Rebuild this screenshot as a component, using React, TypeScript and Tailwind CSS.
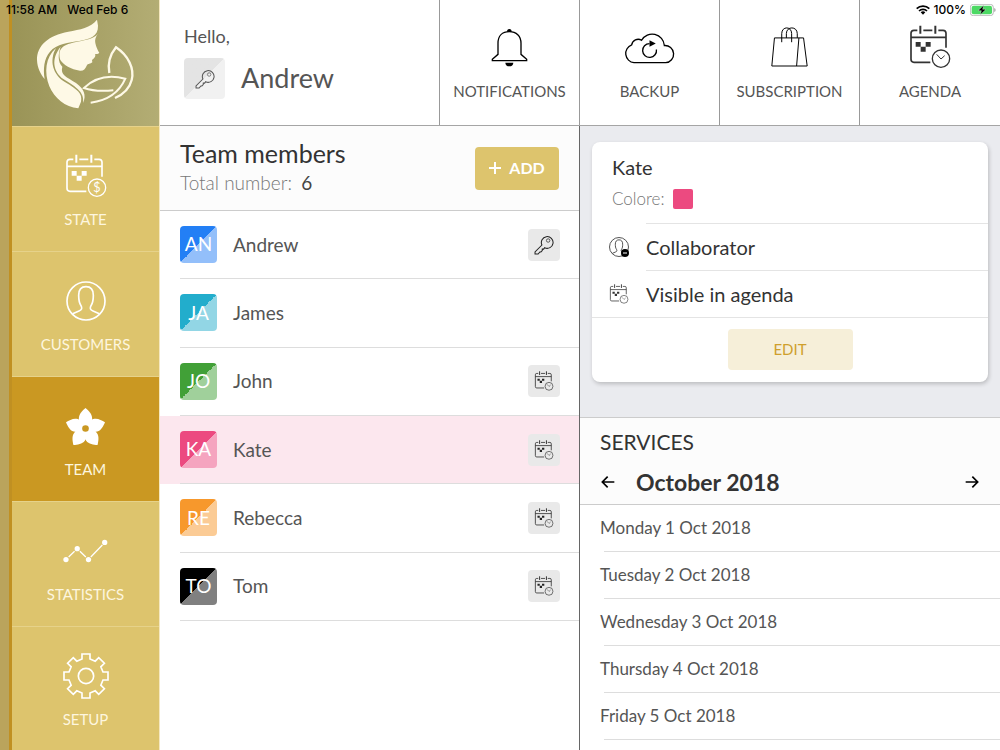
import React, { useState } from "react";
import clsx from "clsx";

type IconProps = { className?: string };

const members = [
  { name: "Andrew", code: "AN", dark: "#237ff5", light: "#93bffa", badge: "key" },
  { name: "James", code: "JA", dark: "#22adcc", light: "#92d6e5", badge: "" },
  { name: "John", code: "JO", dark: "#41a037", light: "#a0d09b", badge: "agenda" },
  { name: "Kate", code: "KA", dark: "#ec4a80", light: "#f5a4bf", badge: "agenda" },
  { name: "Rebecca", code: "RE", dark: "#f7982c", light: "#fbcb95", badge: "agenda" },
  { name: "Tom", code: "TO", dark: "#000000", light: "#808080", badge: "agenda" },
];

const days = [
  "Monday 1 Oct 2018",
  "Tuesday 2 Oct 2018",
  "Wednesday 3 Oct 2018",
  "Thursday 4 Oct 2018",
  "Friday 5 Oct 2018",
];

const CalendarBase = () => (
  <>
    <path
      d="M111 68V25a9 9 0 0 0-9-9H88M70 16H43M25 16H15a9 9 0 0 0-9 9v78a9 9 0 0 0 9 9h49M6 37h105"
      fill="none"
      stroke="currentColor"
      strokeWidth="5"
    />
    <path d="M34 2v24M79 2v24" stroke="currentColor" strokeWidth="6" />
    <path d="M20 51h15v14h15V51h15v14H50v15H35V65H20z" fill="currentColor" />
  </>
);

const AgendaIcon = ({ className }: IconProps) => (
  <svg viewBox="0 0 126 132" className={className} aria-hidden="true">
    <CalendarBase />
    <g fill="none" stroke="currentColor" strokeWidth="4">
      <circle cx="96" cy="101" r="26" />
      <path d="M83 88l13 14 11-10" strokeWidth="3" />
    </g>
  </svg>
);

const StateIcon = ({ className }: IconProps) => (
  <svg viewBox="0 0 126 132" className={className} aria-hidden="true">
    <CalendarBase />
    <circle cx="96" cy="101" r="26" fill="none" stroke="currentColor" strokeWidth="4" />
    <text x="96" y="114" textAnchor="middle" fontSize="38" fill="currentColor">
      $
    </text>
  </svg>
);

const PersonIcon = ({ className, minus }: IconProps & { minus?: boolean }) => (
  <svg viewBox="0 0 120 120" className={className} aria-hidden="true">
    <g fill="none" stroke="currentColor" strokeWidth="5">
      <circle cx="60" cy="60" r="57" />
      <path d="M20 98l19-8c9-3 10-9 6-16-6-8-7-18-7-31 0-17 8-26 22-26s22 9 22 26c0 13-1 23-7 31-4 7-3 13 6 16l19 8" />
    </g>
    {minus && (
      <>
        <circle cx="96" cy="96" r="24" fill="#000" />
        <path d="M84 96h24" stroke="#fff" strokeWidth="6" />
      </>
    )}
  </svg>
);

const FlowerIcon = ({ className }: IconProps) => (
  <svg viewBox="-62 -68 124 124" className={className} aria-hidden="true">
    {[0, 72, 144, 216, 288].map((angle) => (
      <path
        key={angle}
        d="M0 0C-16-14-20-20-20-31C-20-44-9-54 0-62C9-54 20-44 20-31C20-20 16-14 0 0z"
        fill="currentColor"
        transform={`rotate(${angle})`}
      />
    ))}
    <circle r="22" fill="currentColor" />
    <circle r="10" fill="#ca9822" />
  </svg>
);

const StatisticsIcon = ({ className }: IconProps) => (
  <svg viewBox="0 0 136 70" className={className} aria-hidden="true">
    <g fill="currentColor">
      <circle cx="9" cy="61" r="8" />
      <circle cx="43" cy="28" r="8" />
      <circle cx="77" cy="61" r="8" />
      <circle cx="126" cy="9" r="8" />
    </g>
    <path d="M17 53l18-17M51 36l18 17M84 53l35-36" stroke="currentColor" strokeWidth="4" />
  </svg>
);

// one tooth, turned by 45 degrees eight times
const gearPoints = Array.from({ length: 8 }, (_, i) => {
  const a = (i * Math.PI) / 4;
  return [
    [-12, -51],
    [-12, -66],
    [12, -66],
    [12, -51],
  ]
    .map(([x, y]) => {
      const px = x * Math.cos(a) - y * Math.sin(a);
      const py = x * Math.sin(a) + y * Math.cos(a);
      return `${px.toFixed(1)},${py.toFixed(1)}`;
    })
    .join(" ");
}).join(" ");

const GearIcon = ({ className }: IconProps) => (
  <svg viewBox="-69 -69 138 138" className={className} aria-hidden="true">
    <g fill="none" stroke="currentColor" strokeWidth="5">
      <polygon points={gearPoints} />
      <circle r="23" />
    </g>
  </svg>
);

const BellIcon = ({ className }: IconProps) => (
  <svg viewBox="0 0 111 117" className={className} aria-hidden="true">
    <path
      d="M4 98h103v-4L90 79V46C90 24 76 11 55 11S21 24 21 46v33L4 94z"
      fill="none"
      stroke="currentColor"
      strokeWidth="4"
    />
    <path d="M48 11a7 8 0 0 1 14 0zM43 104h24c0 7-5 11-12 11s-12-4-12-11z" fill="currentColor" />
  </svg>
);

const CloudIcon = ({ className }: IconProps) => (
  <svg viewBox="0 0 154 100" className={className} aria-hidden="true">
    <g fill="none" stroke="currentColor" strokeWidth="4">
      <path d="M30 96A28 28 0 0 1 23 42A20 20 0 0 1 53 28A37 37 0 0 1 122 44A26 26 0 0 1 126 96z" />
      <path d="M98 56A21 21 0 1 1 77 38" />
    </g>
    <path d="M77 28l19 10-19 10z" fill="currentColor" />
  </svg>
);

const BagIcon = ({ className }: IconProps) => (
  <svg viewBox="0 0 111 121" className={className} aria-hidden="true">
    <path
      d="M10 33h88l11 85H2zM84 33l-7 85M32 46V20C32-3 62-3 62 20v26M46 33V20C46-3 79-3 79 20v13"
      fill="none"
      stroke="currentColor"
      strokeWidth="3"
    />
  </svg>
);

const KeyIcon = ({ className }: IconProps) => (
  <svg viewBox="0 0 58 58" className={className} aria-hidden="true">
    <g fill="none" stroke="currentColor" strokeWidth="3">
      <path d="M23 29A17 17 0 1 1 31 37l-3 4h-4v4l-4 4h-3l-5 6H3v-6z" />
      <circle cx="41" cy="16" r="5" strokeWidth="2" />
    </g>
  </svg>
);

const Logo = ({ className }: IconProps) => (
  <svg viewBox="108 55 300 270" className={className} role="img" aria-label="Beauty salon">
    <g fill="#fef9e6">
      <path d="M291 57C272 82 240 86 205 93C145 104 110 135 111 178C112 202 122 221 134 235C129 205 132 174 150 153C190 105 296 140 294 75z" />
      <path d="M293 100C287 110 284 117 286 127C288 138 293 148 298 157C295 160 290 160 285 161C288 166 284 170 282 173L276 178L277 185C271 190 264 188 260 195C256 205 250 211 240 210C213 206 190 193 181 178C174 150 180 136 218 126C256 118 282 115 293 100z" />
      <path d="M168 142C147 180 158 222 196 245C232 267 248 278 243 303L235 323C195 320 163 292 148 257C132 215 136 170 168 142z" />
      <path d="M182 138C152 175 160 213 190 235C222 256 255 272 249 307C260 284 252 264 228 247C200 228 180 224 187 198C173 184 174 160 182 138z" />
    </g>
    <g fill="none" stroke="#fef9e6" strokeWidth="7">
      <path d="M328 217C322 185 330 162 348 140C385 165 404 203 395 238C389 262 370 281 345 292" />
      <path d="M272 306C320 300 358 275 376 234C330 222 285 230 252 262C280 272 310 272 340 269" strokeWidth="6" />
    </g>
  </svg>
);

const ArrowIcon = ({ className }: IconProps) => (
  <svg viewBox="0 0 42 36" className={className} aria-hidden="true">
    <path d="M40 18H4M20 2L4 18l16 16" fill="none" stroke="currentColor" strokeWidth="5" />
  </svg>
);

const StatusBar = () => (
  <div className="absolute inset-x-0 top-0 z-10 flex h-5 items-center justify-between pl-1.5 pr-1 font-[Inter,sans-serif] text-[12px] font-medium text-black">
    <div className="flex gap-2.5">
      <span>11:58 AM</span>
      <span>Wed Feb 6</span>
    </div>
    <div className="flex items-center gap-1">
      <svg viewBox="0 0 42 30" className="h-2.5 w-3.5" aria-hidden="true">
        <g fill="none" stroke="currentColor" strokeWidth="5">
          <path d="M2 11a27 27 0 0 1 38 0" />
          <path d="M9 18a17 17 0 0 1 24 0" />
        </g>
        <path d="M14 22a10 10 0 0 1 14 0l-7 7z" fill="currentColor" />
      </svg>
      <span>100%</span>
      <svg viewBox="0 0 78 36" className="h-3 w-[26px]" aria-hidden="true">
        <rect x="1" y="1" width="69" height="34" rx="9" fill="#fff" stroke="#999" strokeWidth="2" />
        <rect x="5" y="5" width="61" height="26" rx="6" fill="#4cd964" />
        <path d="M73 12c5 2 5 10 0 12z" fill="#999" />
        <path d="M41 4L24 20h10l-3 12 17-16H38z" fill="#000" stroke="#fff" strokeWidth="1" />
      </svg>
    </div>
  </div>
);

const navItems = [
  { label: "STATE", icon: <StateIcon className="h-11 w-[42px]" /> },
  { label: "CUSTOMERS", icon: <PersonIcon className="size-10" /> },
  { label: "TEAM", icon: <FlowerIcon className="size-[41px]" /> },
  { label: "STATISTICS", icon: <StatisticsIcon className="h-6 w-[45px]" /> },
  { label: "SETUP", icon: <GearIcon className="size-[46px]" /> },
];

const Sidebar = () => (
  <aside className="flex w-40 shrink-0 border-r border-[#f5e8c0] bg-[#ddc46d]">
    <div className="w-[9px] shrink-0 bg-[#baa45c]" />
    <div className="w-[3px] shrink-0 bg-[#c09022]" />
    <div className="flex min-w-0 flex-1 flex-col">
      <div className="flex h-[126px] shrink-0 items-end justify-center bg-linear-to-r from-[#9a9457] to-[#b3ad74] pb-[17px]">
        <Logo className="h-[90px] w-[100px]" />
      </div>
      <nav>
        {navItems.map(({ label, icon }) => (
          <a
            key={label}
            href={`#${label.toLowerCase()}`}
            className={clsx(
              "flex h-[125px] flex-col items-center border-t border-[#e6d28a] pt-6 text-white",
              label === "TEAM" && "bg-[#ca9822]"
            )}
          >
            <span className="flex h-[50px] items-center">{icon}</span>
            <span className="mt-1.5 text-[15px] leading-6 text-[#fdf6df]">{label}</span>
          </a>
        ))}
      </nav>
    </div>
  </aside>
);

const actions = [
  { label: "NOTIFICATIONS", icon: <BellIcon className="h-[39px] w-[37px] text-black" /> },
  { label: "BACKUP", icon: <CloudIcon className="h-[33px] w-[51px] text-black" /> },
  { label: "SUBSCRIPTION", icon: <BagIcon className="h-10 w-[37px] text-black" /> },
  { label: "AGENDA", icon: <AgendaIcon className="h-11 w-[42px] text-[#333]" /> },
];

const Header = () => (
  <header className="grid h-[126px] shrink-0 grid-cols-6 border-b border-[#a5a5a5] bg-white text-[#555]">
    <div className="col-span-2 border-r border-[#999] pl-6 pt-6">
      <p className="text-lg leading-6">Hello,</p>
      <div className="mt-2.5 flex items-center gap-4">
        <span className="flex size-[41px] items-center justify-center rounded bg-linear-to-br from-[#e4e4e4] from-50% to-[#f1f1f1] to-50%">
          <KeyIcon className="size-5" />
        </span>
        <span className="pb-0.5 text-[27px] leading-8">Andrew</span>
      </div>
    </div>
    {actions.map(({ label, icon }) => (
      <button
        key={label}
        type="button"
        className="flex flex-col items-center border-r border-[#999] pt-[23px] last:border-r-0"
      >
        <span className="flex h-12 items-center">{icon}</span>
        <span className="mt-2 text-[15px] leading-6">{label}</span>
      </button>
    ))}
  </header>
);

type TeamListProps = { selected: string; onSelect: (name: string) => void };

const TeamList = ({ selected, onSelect }: TeamListProps) => (
  <section className="min-w-0 border-r border-[#666] bg-white">
    <div className="flex h-[85px] items-center justify-between border-b border-[#ccc] bg-[#fcfcfc] pl-5 pr-5">
      <div className="pb-0.5">
        <h1 className="text-[25px] leading-8 text-[#333]">Team members</h1>
        <p className="text-[19px] leading-7 font-light text-[#777]">
          Total number: <span className="ml-1 font-normal text-[#444]">6</span>
        </p>
      </div>
      <button
        type="button"
        className="flex h-[43px] w-[84px] items-center justify-center gap-2 rounded bg-[#ddc46d] text-base font-bold text-white"
      >
        <svg viewBox="0 0 12 12" className="size-3" aria-hidden="true">
          <path d="M6 0v12M0 6h12" stroke="currentColor" strokeWidth="2" />
        </svg>
        ADD
      </button>
    </div>
    <ul className="grid h-[410px] auto-rows-fr">
      {members.map(({ name, code, dark, light, badge }) => (
        <li key={name} className={clsx("flex pl-5", name === selected && "bg-[#fce7ee]")}>
          <button
            type="button"
            onClick={() => onSelect(name)}
            className="flex flex-1 items-center gap-4 border-b border-[#ddd] pr-[19px] text-left text-[#555]"
          >
            <span
              className="flex size-[37px] items-center justify-center rounded text-[19px] text-white"
              style={{ backgroundImage: `linear-gradient(135deg, ${dark} 50%, ${light} 50%)` }}
            >
              {code}
            </span>
            <span className="flex-1 text-[19px] leading-6">{name}</span>
            {badge && (
              <span className="flex size-8 items-center justify-center rounded-sm bg-[#e9e9e9] text-[#222]">
                {badge === "key" ? <KeyIcon className="size-5" /> : <AgendaIcon className="size-5" />}
              </span>
            )}
          </button>
        </li>
      ))}
    </ul>
  </section>
);

const MemberCard = ({ name, color }: { name: string; color: string }) => (
  <div className="rounded-lg bg-white text-[#333] shadow-[1px_2px_4px_rgba(0,0,0,0.2)]">
    <div className="flex h-[81px] flex-col justify-center pl-5">
      <h2 className="text-xl leading-8">{name}</h2>
      <p className="flex items-center gap-2 text-[17px] leading-8 font-light text-[#777]">
        Colore:
        <span className="size-5 rounded-xs" style={{ backgroundColor: color }} />
      </p>
    </div>
    <div className="flex items-center">
      <span className="flex w-[54px] shrink-0 justify-center">
        <PersonIcon className="size-5" minus />
      </span>
      <p className="flex-1 border-t border-[#e4e4e4] text-xl leading-[46px]">Collaborator</p>
    </div>
    <div className="flex items-center">
      <span className="flex w-[54px] shrink-0 justify-center">
        <AgendaIcon className="size-5" />
      </span>
      <p className="flex-1 border-t border-[#e4e4e4] text-xl leading-[46px]">Visible in agenda</p>
    </div>
    <div className="flex justify-center border-t border-[#e4e4e4] pb-3 pt-[11px]">
      <button
        type="button"
        className="h-[41px] w-[125px] rounded bg-[#f6efd9] text-[15px] text-[#cf9f2c]"
      >
        EDIT
      </button>
    </div>
  </div>
);

const Services = () => (
  <>
    <div className="h-[88px] shrink-0 border-y border-[#ccc] bg-[#fcfcfc] text-[#333]">
      <h2 className="pl-5 pt-2 text-[21px] leading-8">SERVICES</h2>
      <div className="flex h-12 items-center">
        <button type="button" aria-label="Previous month" className="flex size-11 shrink-0 items-center justify-center pl-3 text-black">
          <ArrowIcon className="h-3 w-3.5" />
        </button>
        <h3 className="flex-1 pl-3 text-[23px] leading-8 font-bold">October 2018</h3>
        <button type="button" aria-label="Next month" className="mr-2 flex size-11 shrink-0 items-center justify-center pl-1 text-black">
          <ArrowIcon className="h-3 w-3.5 rotate-180" />
        </button>
      </div>
    </div>
    <ul className="min-h-0 flex-1 overflow-hidden bg-white text-[17px] text-[#555]">
      {days.map((day) => (
        <li key={day} className="pl-5">
          <p className="h-[46px] leading-[46px]">{day}</p>
          <div className="ml-1 border-b border-[#ddd]" />
        </li>
      ))}
    </ul>
  </>
);

const App = () => {
  const [selected, setSelected] = useState("Kate");
  const member = members.find(({ name }) => name === selected) ?? members[0];

  return (
    <div className="relative flex h-screen overflow-hidden bg-white font-[Lato,sans-serif]">
      <StatusBar />
      <Sidebar />
      <main className="flex min-w-0 flex-1 flex-col">
        <Header />
        <div className="grid min-h-0 flex-1 grid-cols-2">
          <TeamList selected={selected} onSelect={setSelected} />
          <section className="flex min-w-0 flex-col bg-[#eaebef]">
            <div className="px-3 pb-[35px] pt-4">
              <MemberCard name={member.name} color={member.dark} />
            </div>
            <Services />
          </section>
        </div>
      </main>
    </div>
  );
};

export default App;
